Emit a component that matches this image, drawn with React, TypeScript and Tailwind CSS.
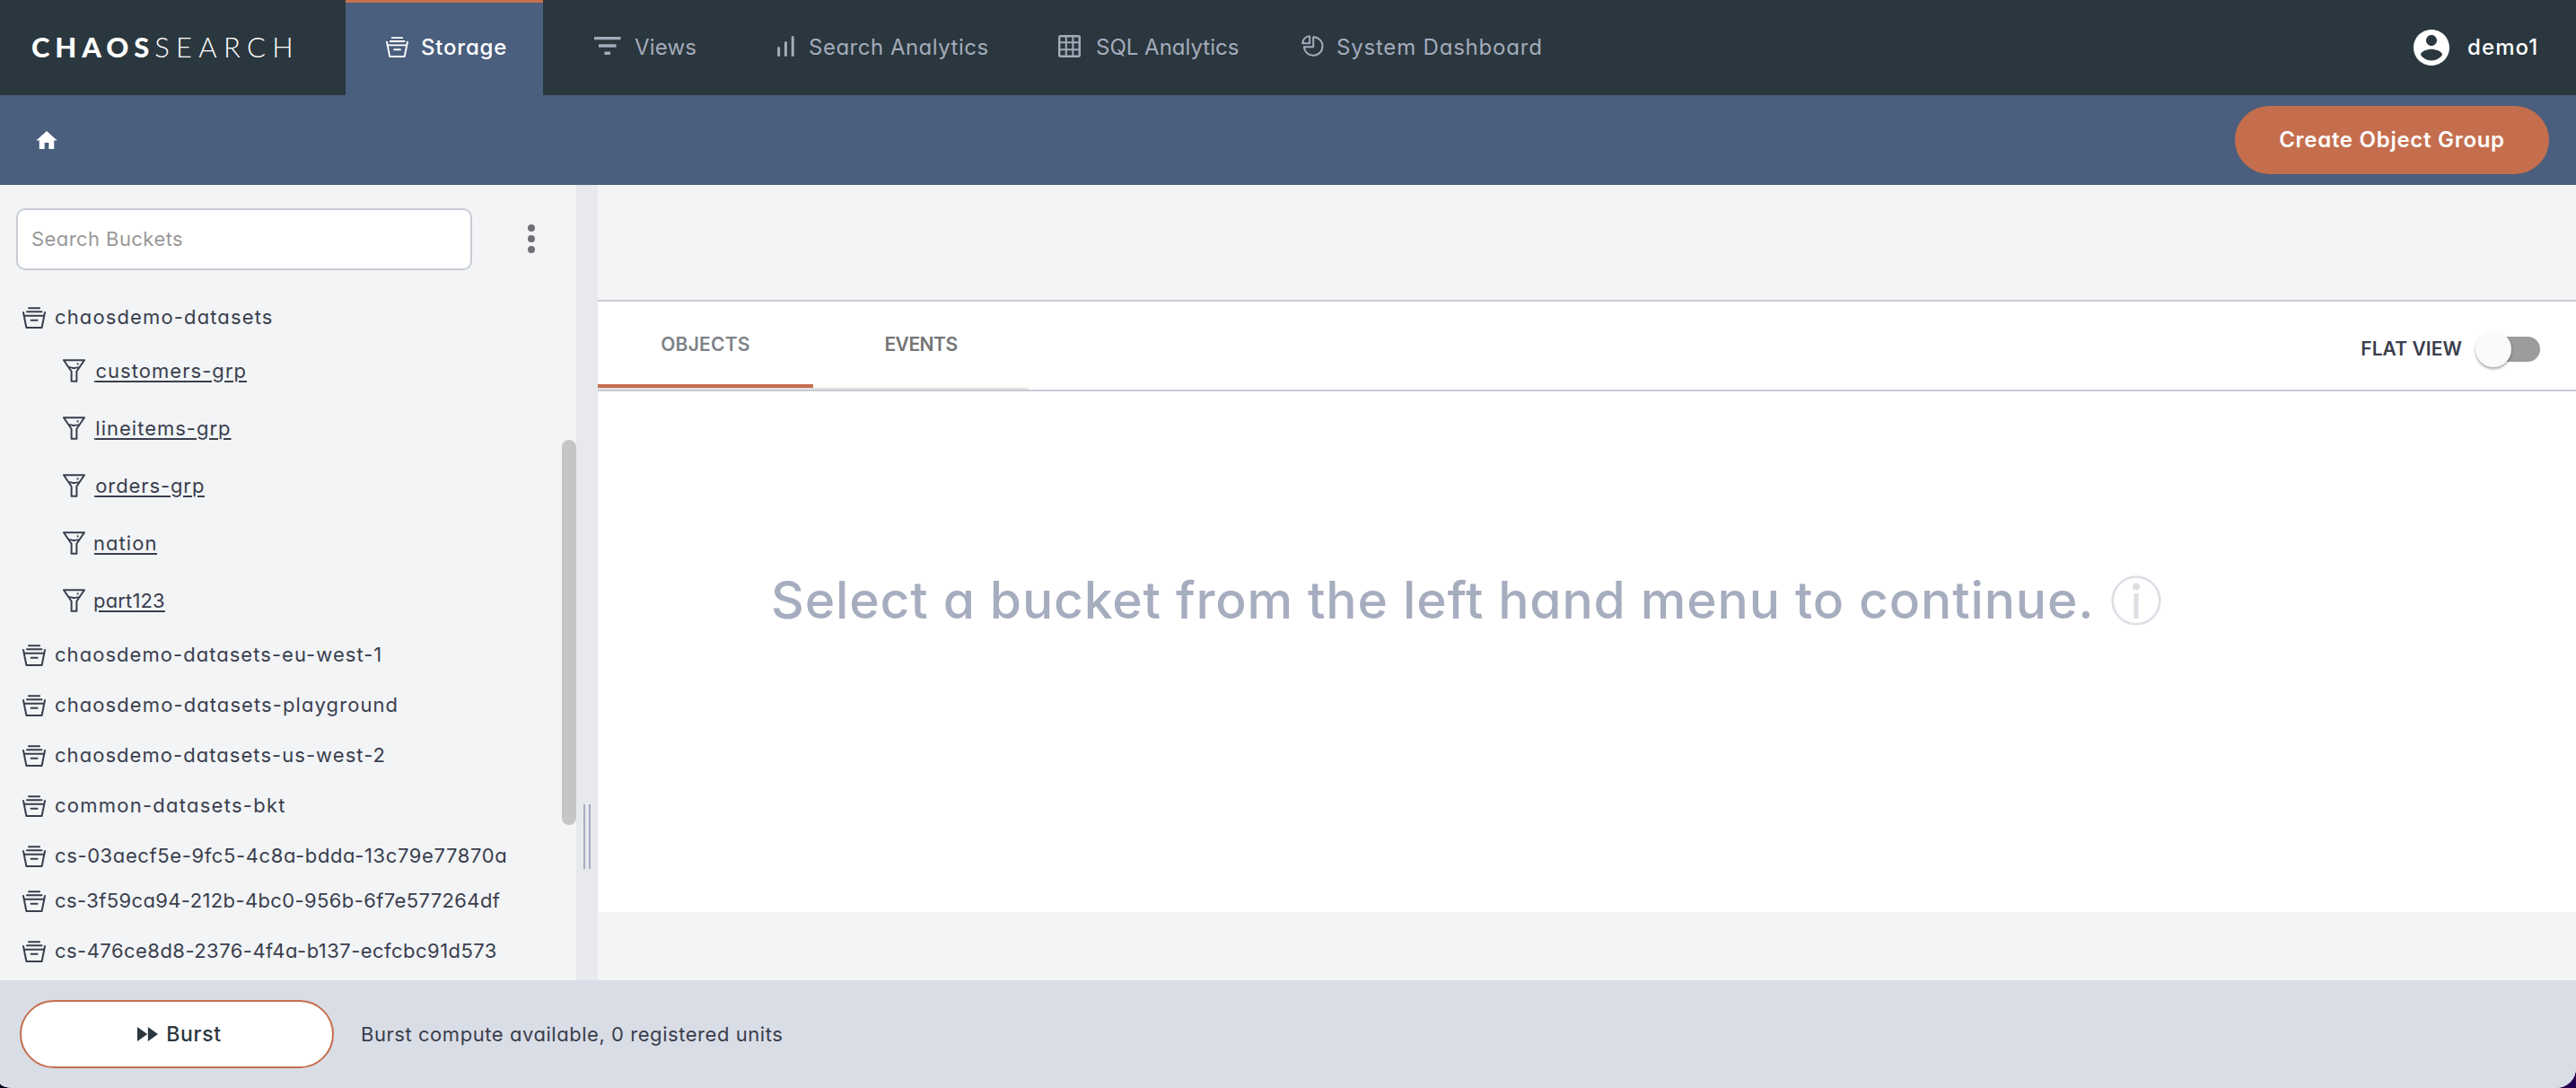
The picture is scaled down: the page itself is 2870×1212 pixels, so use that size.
import type { ReactNode } from 'react';
import clsx from 'clsx';

const BucketIcon = ({ className }: { className?: string }) => (
  <svg viewBox="0 0 26 24" fill="none" stroke="currentColor" strokeWidth="2" strokeLinejoin="round" strokeLinecap="round" className={className}>
    <path d="M7 1.2h12M5 5.2h16.5M1.9 9.8h22.2M1 6l3.4 17h17.2L25 6M9.6 14.8h7" />
  </svg>
);

const FunnelIcon = () => (
  <svg viewBox="0 0 25 26" fill="none" stroke="currentColor" strokeWidth="2" strokeLinejoin="round" className="h-[26px] w-[25px]">
    <path d="M1 1.2h23l-8.6 12.6v11H9.600v-11z" />
    <path d="M6.500 9.300c2.500-.8 4 .9 6.200.7s3.500-.7 5.300-.6" strokeWidth="1.800" />
    <circle cx="16.600" cy="5.400" r="1.100" fill="currentColor" stroke="none" />
  </svg>
);

const ViewsIcon = () => (
  <svg viewBox="0 0 30 20" fill="currentColor" className="h-[20px] w-[30px]">
    <path d="M0 0h29.500v3.200H0zM5 8.300h19.500v3.500H5zM11.500 16.400H18V20h-6.500z" />
  </svg>
);

const BarsIcon = () => (
  <svg viewBox="0 0 19 23" stroke="currentColor" strokeWidth="3" strokeLinecap="round" className="h-[23px] w-[19px]">
    <path d="M1.600 13.500v8M9.400 7.500v14M17.200 1.500v20" />
  </svg>
);

const GridIcon = () => (
  <svg viewBox="0 0 25 25" fill="none" stroke="currentColor" strokeWidth="2" className="h-[25px] w-[25px]">
    <rect x="1.200" y="1.200" width="22.600" height="22.600" rx="1.500" strokeWidth="2.400" />
    <path d="M8.800 1v23M16.400 1v23M1 8.300h23M1 16.200h23" />
  </svg>
);

const PieIcon = () => (
  <svg viewBox="0 0 25 24" fill="none" stroke="currentColor" strokeWidth="2" strokeLinejoin="round" className="h-[24px] w-[25px]">
    <path d="M9.200 1.200v8H1.200a8.200 8.200 0 0 1 8-8z" />
    <path d="M13.200 2.200a10.300 10.300 0 1 1-10.300 11h10.300z" />
  </svg>
);

const HomeIcon = () => (
  <svg viewBox="2 3 20 17" fill="currentColor" className="h-[20px] w-[24px]">
    <path d="M10 20v-6h4v6h5v-8h3L12 3 2 12h3v8z" />
  </svg>
);

const AccountIcon = () => (
  <svg viewBox="2 2 20 20" fill="currentColor" className="size-[40px]">
    <path d="M12 2C6.480 2 2 6.480 2 12s4.480 10 10 10 10-4.480 10-10S17.520 2 12 2zm0 3c1.660 0 3 1.340 3 3s-1.340 3-3 3-3-1.340-3-3 1.340-3 3-3zm0 14.200c-2.500 0-4.710-1.280-6-3.220.03-1.990 4-3.080 6-3.080 1.990 0 5.970 1.090 6 3.080-1.290 1.940-3.500 3.220-6 3.220z" />
  </svg>
);

const FastForwardIcon = () => (
  <svg viewBox="4 6 17.500 12" fill="currentColor" className="h-[16px] w-[23px]">
    <path d="M4 18l8.500-6L4 6v12zm9-12v12l8.500-6L13 6z" />
  </svg>
);

interface Bucket {
  name: string;
  tracking: string;
  className?: string;
  groups?: { name: string; tracking: string; prefixed?: boolean }[];
}

const buckets: Bucket[] = [
  {
    name: 'chaosdemo-datasets',
    tracking: 'tracking-[1.130px]',
    groups: [
      { name: 'customers-grp', tracking: 'tracking-[1.050px]', prefixed: true },
      { name: 'lineitems-grp', tracking: 'tracking-[1.000px]', prefixed: true },
      { name: 'orders-grp', tracking: 'tracking-[0.900px]', prefixed: true },
      { name: 'nation', tracking: 'tracking-[1.050px]' },
      { name: 'part123', tracking: 'tracking-[0.160px]' },
    ],
  },
  { name: 'chaosdemo-datasets-eu-west-1', tracking: 'tracking-[1.040px]' },
  { name: 'chaosdemo-datasets-playground', tracking: 'tracking-[1.090px]' },
  { name: 'chaosdemo-datasets-us-west-2', tracking: 'tracking-[1.050px]' },
  { name: 'common-datasets-bkt', tracking: 'tracking-[1.250px]' },
  { name: 'cs-03aecf5e-9fc5-4c8a-bdda-13c79e77870a', tracking: 'tracking-[0.610px]' },
  { name: 'cs-3f59ca94-212b-4bc0-956b-6f7e577264df', tracking: 'tracking-[0.380px]', className: '-mt-1.5' },
  { name: 'cs-476ce8d8-2376-4f4a-b137-ecfcbc91d573', tracking: 'tracking-[0.460px]' },
];

const NavItem = ({ icon, label, className, gap }: { icon: ReactNode; label: string; className: string; gap: string }) => (
  <a href="#" className={clsx('flex h-full items-center whitespace-nowrap text-2xl text-[#a4abbb]', className)}>
    <span className={clsx('flex shrink-0 -translate-y-0.5', gap)}>{icon}</span>
    {label}
  </a>
);

const Header = () => (
  <header className="flex h-[106px] shrink-0 items-center bg-[#2a373e] text-white">
    <div className="w-[385px] whitespace-nowrap pb-0.5 pl-[35px] font-['Lato',sans-serif] text-[31px] leading-none">
      <span className="font-black tracking-[5.900px]">CHAOS</span>
      <span className="font-light tracking-[7.300px]">SEARCH</span>
    </div>
    <a href="#" className="flex h-full w-[220px] items-center border-t-[3px] border-[#c56e4e] bg-[#4a5e7d] pb-[3px] pl-[45px] text-2xl font-medium tracking-[0.800px]">
      <BucketIcon className="mr-[14px] -mt-0.5 h-[23px] w-[25px] shrink-0" />
      Storage
    </a>
    <nav className="ml-[57px] flex h-full items-center">
      <NavItem icon={<ViewsIcon />} label="Views" className="w-[204px] tracking-[0.200px]" gap="mr-[15px]" />
      <NavItem icon={<BarsIcon />} label="Search Analytics" className="w-[313px] tracking-[0.500px]" gap="mr-[16px]" />
      <NavItem icon={<GridIcon />} label="SQL Analytics" className="w-[271px]" gap="mr-[17px]" />
      <NavItem icon={<PieIcon />} label="System Dashboard" className="tracking-[0.800px]" gap="mr-[14px]" />
    </nav>
    <div className="ml-auto flex w-[181px] items-center gap-[20px] text-2xl font-medium tracking-[1.100px]">
      <AccountIcon />
      demo1
    </div>
  </header>
);

const SubHeader = () => (
  <div className="flex h-[100px] shrink-0 items-center justify-between bg-[#4a5e7d] pl-[40px] pr-[30px] text-white">
    <HomeIcon />
    <button className="h-[76px] w-[350px] rounded-full bg-[#c56e4e] text-[24px] font-semibold tracking-[0.720px]">Create Object Group</button>
  </div>
);

const Sidebar = () => (
  <aside className="relative w-[642px] shrink-0 overflow-hidden">
    <div className="flex items-center pl-[18px] pt-[26px]">
      <input
        placeholder="Search Buckets"
        className="h-[69px] w-[508px] rounded-[10px] border-2 border-[#c8ccd3] bg-white px-[15px] pb-px text-[22px] tracking-[0.430px] placeholder:text-[#989898]"
      />
      <svg viewBox="0 0 8 32" fill="#6f7073" className="-mt-px ml-[62px] h-8 w-2">
        <circle cx="4" cy="4" r="4" />
        <circle cx="4" cy="16" r="4" />
        <circle cx="4" cy="28" r="4" />
      </svg>
    </div>
    <ul className="mt-6 text-[22px] text-[#3a3e4d]">
      {buckets.map((bucket) => (
        <li key={bucket.name} className={bucket.className}>
          <div className={clsx('flex h-[56px] items-center whitespace-nowrap pl-[25px]', bucket.tracking)}>
            <BucketIcon className="mr-[10px] mt-px h-[24px] w-[26px] shrink-0" />
            {bucket.name}
          </div>
          {bucket.groups?.map((group) => (
            <div key={group.name} className="flex h-[64px] items-center pl-[70px]">
              <FunnelIcon />
              <div className="ml-[10px] overflow-hidden">
                <a
                  href="#"
                  className={clsx(
                    'inline-block underline decoration-2 underline-offset-[3px]',
                    group.tracking,
                    group.prefixed ? "-ml-[6px] before:content-[':']" : '-ml-px',
                  )}
                >
                  {group.name}
                </a>
              </div>
            </div>
          ))}
        </li>
      ))}
    </ul>
    {/* scrollbar thumb */}
    <div className="absolute right-0 top-[284px] h-[429px] w-[16px] rounded-full bg-[#c5c5c5]" />
  </aside>
);

const Splitter = () => (
  <div className="flex w-[24px] shrink-0 items-start gap-[4px] bg-[#e7e9ed] pl-[8px] pt-[690px]">
    <div className="h-[72px] w-[2px] bg-[#a6adbf]" />
    <div className="h-[72px] w-[2px] bg-[#a6adbf]" />
  </div>
);

const Tabs = () => (
  <div className="flex h-[102px] justify-between border-y-2 border-[#c8ccd3]">
    <div className="flex h-[98px] border-b-2 border-[#e0e0e0] text-[21px] font-semibold">
      <button className="w-[240px] border-b-4 border-[#c56e4e] pt-[3px] text-[#7d8388] tracking-[0.240px]">OBJECTS</button>
      <button className="w-[240px] border-b-4 border-transparent pt-[3px] text-[#757575] tracking-[-0.500px]">EVENTS</button>
    </div>
    <div className="flex items-center pr-[40px] pt-2">
      <span className="text-[21px] font-semibold tracking-[0.080px] text-[#3a3e4d]">FLAT VIEW</span>
      <button className="ml-[19px] flex h-[28px] w-[68px] items-center rounded-full bg-[#9c9c9c]">
        <span className="-ml-1 size-[40px] shrink-0 rounded-full bg-[#fafafa] shadow-[0_2px_3px_rgba(0,0,0,0.35)]" />
      </button>
    </div>
  </div>
);

const Message = () => (
  <div className="flex items-center pl-[193px] pt-[192px]">
    <h1 className="whitespace-nowrap text-[57px] font-medium leading-[82px] tracking-[0.860px] text-[#a6adbf]">
      Select a bucket from the left hand menu to continue.
    </h1>
    <svg viewBox="0 0 56 56" fill="none" className="ml-[19px] size-[56px]">
      <circle cx="28" cy="28" r="26.300" stroke="#dddfe5" strokeWidth="2.700" />
      <circle cx="28" cy="12.500" r="4" fill="#dddfe5" />
      <path d="M28 20v28" stroke="#dddfe5" strokeWidth="5" />
    </svg>
  </div>
);

const Footer = () => (
  <footer className="flex h-[120px] shrink-0 items-start bg-[#d9dde6] pl-[22px] pt-[22px]">
    <button className="flex h-[76px] w-[350px] items-center justify-center gap-[9px] rounded-full border-2 border-[#c56e4e] bg-white pl-[6px] text-[23px] font-medium tracking-[0.700px] text-[#2a373e]">
      <FastForwardIcon />
      Burst
    </button>
    <p className="ml-[30px] leading-[76px] text-[22px] tracking-[0.550px] text-[#3a3e4d]">Burst compute available, 0 registered units</p>
  </footer>
);

export default function App() {
  return (
    <div className="h-[1212px] w-[2870px] bg-linear-to-r from-[#05051a] to-[#240050]">
      <div className="flex h-full flex-col overflow-hidden bg-[#f2f4f6] font-['Inter',sans-serif] [border-bottom-left-radius:15px_6px] [border-bottom-right-radius:22px] [font-feature-settings:'cv11']">
        <Header />
        <SubHeader />
        <div className="flex min-h-0 flex-1">
          <Sidebar />
          <Splitter />
          <main className="flex-1 pt-[128px]">
            <div className="h-[682px] bg-white">
              <Tabs />
              <Message />
            </div>
          </main>
        </div>
        <Footer />
      </div>
    </div>
  );
}
